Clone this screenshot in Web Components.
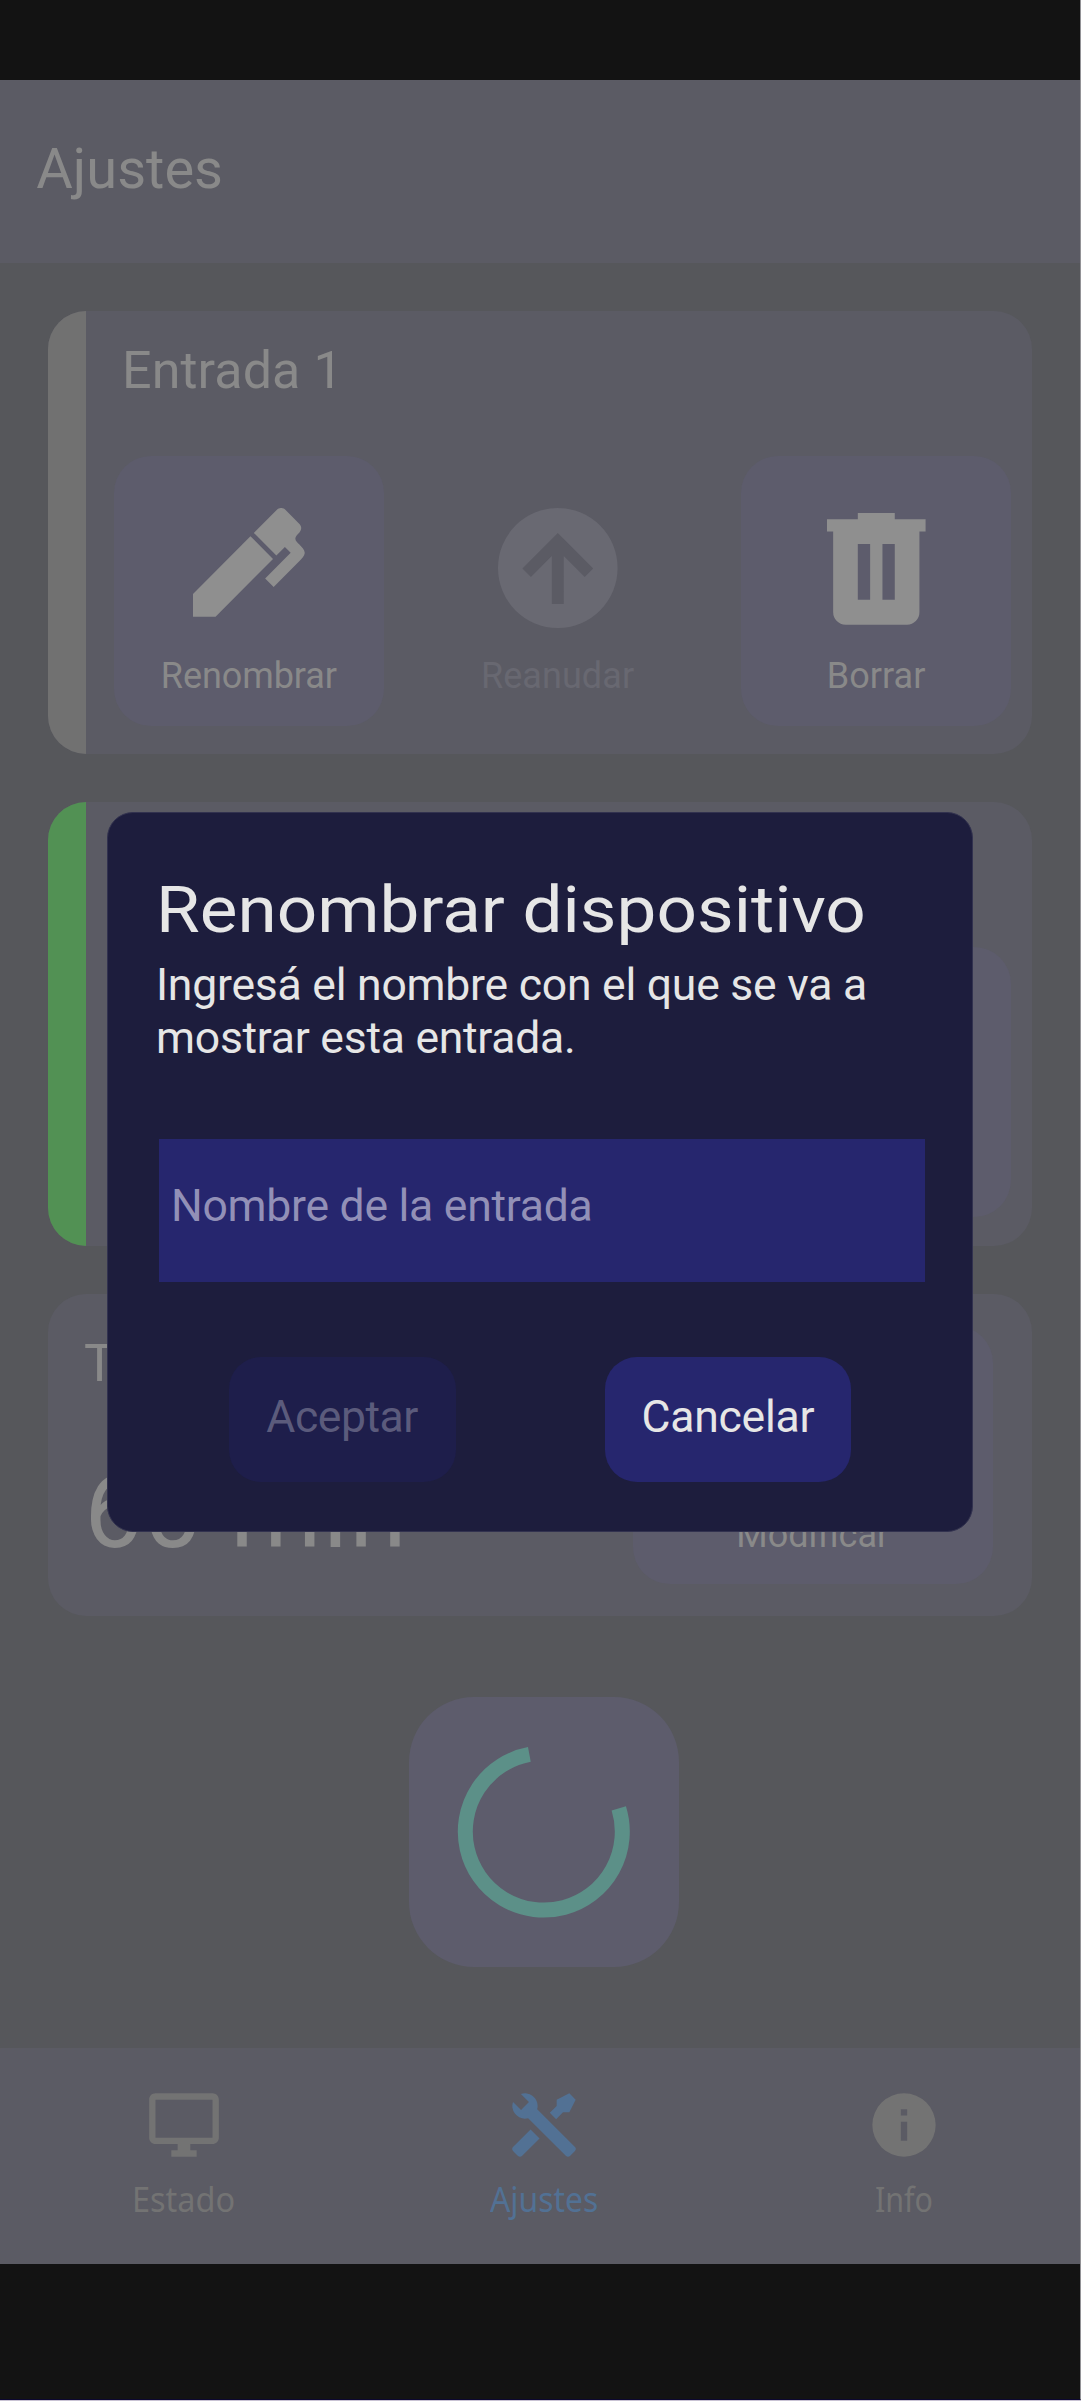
<!DOCTYPE html>
<html lang="es">
<head>
<meta charset="utf-8">
<title>Ajustes</title>
<style>
html,body{margin:0;padding:0;background:#c9c3d4}
body{width:1081px;height:2401px;overflow:hidden;font-family:Roboto,sans-serif;color:#898989}
</style>
</head>
<body>
<settings-app></settings-app>
<script>
const define=(name,css,html,extra)=>customElements.define(name,class extends HTMLElement{
  connectedCallback(){
    if(this.shadowRoot)return;
    this.attachShadow({mode:'open'}).innerHTML='<style>:host{display:block;box-sizing:border-box}'+css+'</style>'+html;
    if(extra)extra(this,this.shadowRoot);
  }
});

/* One line of text whose box is exactly its ink width. */
customElements.define('fit-text',class extends HTMLElement{
  connectedCallback(){
    if(this.shadowRoot)return;
    const size=+this.getAttribute('size'),w=+this.getAttribute('w'),line=this.getAttribute('line');
    const family=this.getAttribute('family')||'Roboto',text=this.getAttribute('text');
    const ctx=document.createElement('canvas').getContext('2d');
    ctx.font=size+'px "'+family+'"';
    const m=ctx.measureText(text),ink=m.actualBoundingBoxLeft+m.actualBoundingBoxRight,left=m.actualBoundingBoxLeft;
    let style;
    if(!w)style='';
    else if(this.hasAttribute('stretch')){const k=w/ink;style='transform-origin:0 0;transform:scaleX('+k+');margin-left:'+left*k+'px';}
    else style='margin-left:'+left+'px;letter-spacing:'+(w-ink)/(text.length-1)+'px';
    this.attachShadow({mode:'open'}).innerHTML='<style>:host{display:block;flex:none;width:'+(w?w+'px':'auto')+';height:'+line+'px;font:'+size+'px/'+line+'px "'+family+'",sans-serif;white-space:nowrap}span{display:block;width:max-content;'+style+'}</style><span></span>';
    this.shadowRoot.querySelector('span').textContent=text;
  }
});

const icons={
  pen:['3 3 18.6 18','M20.71 7.04C20.37 7.38 20.04 7.71 20.03 8.04C20 8.36 20.34 8.69 20.66 9C21.14 9.5 21.61 9.95 21.59 10.44C21.57 10.93 21.06 11.44 20.55 11.94L16.42 16.08L15 14.66L19.25 10.42L18.29 9.46L16.87 10.87L13.12 7.12L16.96 3.29C17.35 2.9 18 2.9 18.37 3.29L20.71 5.63C21.1 6 21.1 6.65 20.71 7.04M3 17.25L12.56 7.68L16.31 11.43L6.75 21H3V17.25Z'],
  up:['2 2 20 20','M13 18V10L16.5 13.5L17.92 12.08L12 6.16L6.08 12.08L7.5 13.5L11 10V18H13M12 2A10 10 0 0 1 22 12A10 10 0 0 1 12 22A10 10 0 0 1 2 12A10 10 0 0 1 12 2Z'],
  trash:['4 3 16 18','M9 3V4H4V6H5V19A2 2 0 0 0 7 21H17A2 2 0 0 0 19 19V6H20V4H15V3H9M9 8H11V17H9V8M13 8H15V17H13V8Z'],
  monitor:['0 0 24 24','M21 2H3c-1.1 0-2 .9-2 2v12c0 1.1.9 2 2 2h7v2H8v2h8v-2h-2v-2h7c1.1 0 2-.9 2-2V4c0-1.1-.9-2-2-2zm0 14H3V4h18v12z'],
  tools:['0 0 24 24','M21.71 20.29L20.29 21.71A1 1 0 0 1 18.88 21.71L7 9.85A3.81 3.81 0 0 1 6 10A4 4 0 0 1 2.22 4.7L4.76 7.24L5.29 6.71L6.71 5.29L7.24 4.76L4.7 2.22A4 4 0 0 1 10 6A3.81 3.81 0 0 1 9.85 7L21.71 18.88A1 1 0 0 1 21.71 20.29M2.29 18.88A1 1 0 0 0 2.29 20.29L3.71 21.71A1 1 0 0 0 5.12 21.71L10.59 16.25L7.76 13.42M20 2L16 4V6L13.83 8.17L15.83 10.17L18 8H20L22 4Z'],
  info:['0 0 24 24','M13 9H11V7H13M13 17H11V11H13M12 2A10 10 0 0 0 2 12A10 10 0 0 0 12 22A10 10 0 0 0 22 12A10 10 0 0 0 12 2Z']
};
define('app-icon','svg{display:block;fill:currentColor}','',(h,r)=>{
  const [vb,d]=icons[h.getAttribute('name')];
  r.innerHTML+='<svg width="'+h.getAttribute('w')+'" height="'+h.getAttribute('h')+'" viewBox="'+vb+'" preserveAspectRatio="none"><path fill-rule="evenodd" d="'+d+'"/></svg>';
});

define('icon-button',
 ':host{display:flex;flex-direction:column;align-items:center;width:270px;height:270px;border-radius:37px;background:#5d5c6c;flex:none}'+
 ':host([disabled]){background:none;color:#686871}.icon{height:146.7px;margin-top:52.3px;color:#8f8f8f}:host([disabled]) .icon{color:#696972}',
 '<div class="icon"><slot name="icon"></slot></div><slot></slot>');

define('device-card',
 ':host{display:flex;height:443.3px;border-radius:38px;background:#5b5b64;overflow:hidden}'+
 '.stripe{width:38.3px;background:var(--stripe)}.body{flex:1;padding:30px 0 0 28px}'+
 '.title{height:60px;margin:0 0 54.7px 11.7px}.row{display:flex}',
 '<div class="stripe"></div><div class="body"><div class="title"><slot name="title"></slot></div><div class="row"><slot></slot></div></div>');

define('time-card',
 ':host{display:flex;justify-content:space-between;height:322.7px;border-radius:38px;background:#5b5b64;padding:32px 39px 32px 36px}'+
 '.left{padding-top:8px}.value{padding:58px 0 0 6.2px}'+
 '.btn{width:360px;border-radius:37px;background:#5d5c6c;display:flex;flex-direction:column;align-items:center;padding-top:188.5px;box-sizing:border-box}',
 '<div class="left"><fit-text size="52" line="60" text="T"></fit-text><div class="value"><fit-text size="104" line="120" w="310" text="60 min"></fit-text></div></div>'+
 '<div class="btn"><fit-text size="36" line="42" w="149.5" text="Modificar"></fit-text></div>');

define('loading-box',
 ':host{width:270px;height:270px;border-radius:65px;background:#5d5c6c;margin:32.7px 0 0 361.3px}svg{display:block}',
 '<svg width="270" height="270" viewBox="0 0 270 270"><path fill="none" stroke="#5c9088" stroke-width="15"/></svg>',
 (h,r)=>{
   const cx=134.8,cy=134.6,R=78.5,p=a=>{a*=Math.PI/180;return (cx+R*Math.cos(a)).toFixed(2)+' '+(cy+R*Math.sin(a)).toFixed(2)};
   r.querySelector('path').setAttribute('d','M'+p(-17.2)+'A'+R+' '+R+' 0 1 1 '+p(-100.6));
 });

define('tab-item',
 ':host{display:flex;flex-direction:column;align-items:center;width:360px;padding-top:39px;gap:12px;color:#737373}:host([active]){color:#527194}',
 '<slot></slot>');

define('rename-dialog',
 ':host{position:absolute;left:107px;top:812px;width:866px;height:719.5px;border-radius:26px;background:#1d1d3d;border:1px solid #32324f;color:#e6e6e6;padding:0 47px 0 50.5px}'+
 '.title{padding:73px 0 1px 3px}.text{padding:23.5px 0 0 .5px}'+
 '.field{display:flex;height:143.6px;background:#26266e;margin-top:74.2px;padding:41px 0 0 15.5px;box-sizing:border-box;color:#9290b7}'+
 '.actions{display:flex;margin:74.8px 0 0 70.5px;gap:149.6px}'+
 '.b{display:flex;justify-content:center;box-sizing:border-box;height:124.7px;border-radius:32px;padding-top:33.8px}'+
 '.ok{width:226.6px;background:#1e1e4b;color:#5b5b7c}.no{width:245.7px;background:#26266e;padding-left:2px}',
 '<div class="title"><fit-text size="64.5" line="48" w="701.3" stretch text="Renombrar dispositivo"></fit-text></div>'+
 '<div class="text"><fit-text size="44.5" line="53" w="706" text="Ingresá el nombre con el que se va a"></fit-text><fit-text size="44.5" line="53" w="414" text="mostrar esta entrada."></fit-text></div>'+
 '<div class="field"><fit-text size="44.5" line="53" w="416.5" text="Nombre de la entrada"></fit-text></div>'+
 '<div class="actions"><div class="b ok"><fit-text size="44.5" line="53" w="152" text="Aceptar"></fit-text></div><div class="b no"><fit-text size="44.5" line="53" w="171" text="Cancelar"></fit-text></div></div>');

define('settings-app',
 ':host{position:relative;display:flex;flex-direction:column;width:1081px;height:2400px;background:#131313;border-right:1px solid #929296;border-bottom:1px solid #0c0730}'+
 'header{box-sizing:border-box;margin-top:80px;height:183px;background:#5b5b64;padding:56px 0 0 36.3px}'+
 'main{box-sizing:border-box;height:1784.7px;background:#56575b;padding:48px 48px 0;display:flex;flex-direction:column;gap:48px}'+
 'nav{display:flex;height:216.3px;background:#5b5b64;box-sizing:border-box;padding-left:4px;overflow:hidden}tab-item{flex:none}',
 `<header><fit-text size="56" line="66" w="184.8" text="Ajustes"></fit-text></header>
 <main>
  <device-card style="--stripe:#717171">
   <fit-text slot="title" size="52" line="60" w="206.5" text="Entrada 1"></fit-text>
   <icon-button><app-icon slot="icon" name="pen" w="111.8" h="108.7"></app-icon><fit-text size="36" line="42" w="174" style="margin-left:1px" text="Renombrar"></fit-text></icon-button>
   <icon-button disabled style="margin:0 48.6px 0 38.6px"><app-icon slot="icon" name="up" w="119.6" h="120"></app-icon><fit-text size="36" line="42" w="151" style="margin-left:1px" text="Reanudar"></fit-text></icon-button>
   <icon-button><app-icon slot="icon" name="trash" w="98.6" h="111.7" style="margin-top:5px"></app-icon><fit-text size="36" line="42" w="96.5" style="margin-left:1px" text="Borrar"></fit-text></icon-button>
  </device-card>
  <device-card style="--stripe:#529154">
   <icon-button style="margin-left:627.2px"></icon-button>
  </device-card>
  <time-card></time-card>
  <loading-box></loading-box>
 </main>
 <nav>
  <tab-item><app-icon name="monitor" w="76" h="76"></app-icon><fit-text family="Noto Sans" stretch size="35" line="48" w="99.3" text="Estado"></fit-text></tab-item>
  <tab-item active><app-icon name="tools" w="76" h="76"></app-icon><fit-text family="Noto Sans" stretch size="35" line="48" w="107.6" text="Ajustes"></fit-text></tab-item>
  <tab-item><app-icon name="info" w="76" h="76"></app-icon><fit-text family="Noto Sans" stretch size="35" line="48" w="56" text="Info"></fit-text></tab-item>
 </nav>
 <rename-dialog></rename-dialog>`);
</script>
</body>
</html>
